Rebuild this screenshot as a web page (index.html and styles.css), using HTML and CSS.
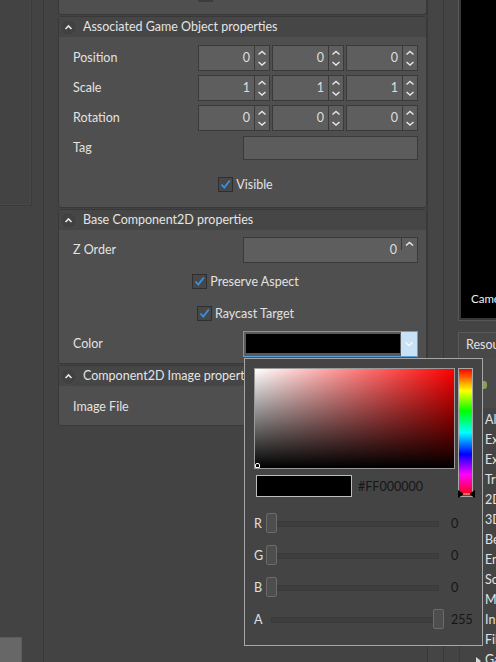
FILE: index.html
```html
<!DOCTYPE html>
<html lang="en">
<head>
    <meta charset="UTF-8">
    <title>Inspector</title>
    <link rel="stylesheet" href="styles.css">
</head>
<body>
    <div class="app">
        <div class="left-dock">
            <div class="left-panel"></div>
            <div class="left-foot"></div>
        </div>

        <div class="inspector">
            <div class="section section-top"><div class="top-stub"></div></div>

            <!-- Associated Game Object -->
            <div class="section">
                <div class="section-head">
                    <span class="toggle"><svg width="17" height="17" viewBox="0 0 17 17"><path d="M5.5 10 L8.5 7 L11.5 10" fill="none" stroke="#e6e6e6" stroke-width="1.6"/></svg></span>
                    <span class="title">Associated Game Object properties</span>
                </div>
                <div class="section-body body-go">
                    <div class="row">
                        <span class="label">Position</span>
                        <div class="vec">
                            <div class="spin"><span class="val">0</span><span class="spin-btns"><svg width="14" height="24" viewBox="0 0 14 24"><path d="M3.5 8.5 L7 5.5 L10.5 8.5 M3.5 16 L7 19 L10.5 16" fill="none" stroke="#e8e8e8" stroke-width="1.4"/></svg></span></div>
                            <div class="spin"><span class="val">0</span><span class="spin-btns"><svg width="14" height="24" viewBox="0 0 14 24"><path d="M3.5 8.5 L7 5.5 L10.5 8.5 M3.5 16 L7 19 L10.5 16" fill="none" stroke="#e8e8e8" stroke-width="1.4"/></svg></span></div>
                            <div class="spin"><span class="val">0</span><span class="spin-btns"><svg width="14" height="24" viewBox="0 0 14 24"><path d="M3.5 8.5 L7 5.5 L10.5 8.5 M3.5 16 L7 19 L10.5 16" fill="none" stroke="#e8e8e8" stroke-width="1.4"/></svg></span></div>
                        </div>
                    </div>
                    <div class="row">
                        <span class="label">Scale</span>
                        <div class="vec">
                            <div class="spin"><span class="val">1</span><span class="spin-btns"><svg width="14" height="24" viewBox="0 0 14 24"><path d="M3.5 8.5 L7 5.5 L10.5 8.5 M3.5 16 L7 19 L10.5 16" fill="none" stroke="#e8e8e8" stroke-width="1.4"/></svg></span></div>
                            <div class="spin"><span class="val">1</span><span class="spin-btns"><svg width="14" height="24" viewBox="0 0 14 24"><path d="M3.5 8.5 L7 5.5 L10.5 8.5 M3.5 16 L7 19 L10.5 16" fill="none" stroke="#e8e8e8" stroke-width="1.4"/></svg></span></div>
                            <div class="spin"><span class="val">1</span><span class="spin-btns"><svg width="14" height="24" viewBox="0 0 14 24"><path d="M3.5 8.5 L7 5.5 L10.5 8.5 M3.5 16 L7 19 L10.5 16" fill="none" stroke="#e8e8e8" stroke-width="1.4"/></svg></span></div>
                        </div>
                    </div>
                    <div class="row">
                        <span class="label">Rotation</span>
                        <div class="vec">
                            <div class="spin"><span class="val">0</span><span class="spin-btns"><svg width="14" height="24" viewBox="0 0 14 24"><path d="M3.5 8.5 L7 5.5 L10.5 8.5 M3.5 16 L7 19 L10.5 16" fill="none" stroke="#e8e8e8" stroke-width="1.4"/></svg></span></div>
                            <div class="spin"><span class="val">0</span><span class="spin-btns"><svg width="14" height="24" viewBox="0 0 14 24"><path d="M3.5 8.5 L7 5.5 L10.5 8.5 M3.5 16 L7 19 L10.5 16" fill="none" stroke="#e8e8e8" stroke-width="1.4"/></svg></span></div>
                            <div class="spin"><span class="val">0</span><span class="spin-btns"><svg width="14" height="24" viewBox="0 0 14 24"><path d="M3.5 8.5 L7 5.5 L10.5 8.5 M3.5 16 L7 19 L10.5 16" fill="none" stroke="#e8e8e8" stroke-width="1.4"/></svg></span></div>
                        </div>
                    </div>
                    <div class="row">
                        <span class="label">Tag</span>
                        <div class="text-field"></div>
                    </div>
                    <div class="check-row check-first">
                        <span class="checkbox"><svg width="13" height="13" viewBox="0 0 13 13"><path d="M2.5 6.5 L5.3 9.5 L10.8 2.5" fill="none" stroke="#3592e8" stroke-width="1.8"/></svg></span>
                        <span>Visible</span>
                    </div>
                </div>
            </div>

            <!-- Base Component2D -->
            <div class="section">
                <div class="section-head">
                    <span class="toggle"><svg width="17" height="17" viewBox="0 0 17 17"><path d="M5.5 10 L8.5 7 L11.5 10" fill="none" stroke="#e6e6e6" stroke-width="1.6"/></svg></span>
                    <span class="title">Base Component2D properties</span>
                </div>
                <div class="section-body body-base">
                    <div class="row">
                        <span class="label">Z Order</span>
                        <div class="z-field">
                            <span class="val">0</span>
                            <span class="z-btn"><svg width="15" height="12" viewBox="0 0 15 12"><path d="M4 7.5 L7.5 4.5 L11 7.5" fill="none" stroke="#e8e8e8" stroke-width="1.6"/></svg></span>
                        </div>
                    </div>
                    <div class="check-row">
                        <span class="checkbox"><svg width="13" height="13" viewBox="0 0 13 13"><path d="M2.5 6.5 L5.3 9.5 L10.8 2.5" fill="none" stroke="#3592e8" stroke-width="1.8"/></svg></span>
                        <span>Preserve Aspect</span>
                    </div>
                    <div class="check-row">
                        <span class="checkbox"><svg width="13" height="13" viewBox="0 0 13 13"><path d="M2.5 6.5 L5.3 9.5 L10.8 2.5" fill="none" stroke="#3592e8" stroke-width="1.8"/></svg></span>
                        <span>Raycast Target</span>
                    </div>
                    <div class="row">
                        <span class="label">Color</span>
                        <div class="color-field">
                            <span class="swatch"></span>
                            <span class="drop-btn"><svg width="16" height="24" viewBox="0 0 16 24"><path d="M4.5 10.5 L8 13.5 L11.5 10.5" fill="none" stroke="#f4f9fd" stroke-width="1.6"/></svg></span>
                        </div>
                    </div>
                </div>
            </div>

            <!-- Component2D Image -->
            <div class="section">
                <div class="section-head">
                    <span class="toggle"><svg width="17" height="17" viewBox="0 0 17 17"><path d="M5.5 10 L8.5 7 L11.5 10" fill="none" stroke="#e6e6e6" stroke-width="1.6"/></svg></span>
                    <span class="title">Component2D Image properties</span>
                </div>
                <div class="section-body body-image">
                    <div class="row">
                        <span class="label">Image File</span>
                    </div>
                </div>
            </div>
        </div>

        <div class="right-dock">
            <div class="dock-strip"></div>
            <div class="dock-main">
                <div class="scene-frame">
                    <div class="scene"><span class="scene-label">Camera</span></div>
                </div>
                <div class="res-tab">Resources</div>
                <div class="res-toolbar"><span class="add-icon"></span></div>
                <ul class="res-list">
                    <li>All Resources</li>
                    <li>Examples</li>
                    <li>Exported</li>
                    <li>Triggers</li>
                    <li>2D Sprites</li>
                    <li>3D Models</li>
                    <li>Behaviours</li>
                    <li>Environment</li>
                    <li>Sounds</li>
                    <li>Materials</li>
                    <li>Instances</li>
                    <li>Files</li>
                    <li class="folded">Game Objects</li>
                </ul>
            </div>
        </div>
    </div>

    <!-- color picker popup over the inspector -->
    <div class="color-popup">
        <div class="picker-top">
            <div class="picker-left">
                <div class="sv-box"><span class="sv-marker"></span></div>
                <div class="preview-row">
                    <span class="preview"></span>
                    <span class="hex">#FF000000</span>
                </div>
            </div>
            <div class="hue-bar">
                <svg class="hue-marker" width="17" height="8" viewBox="0 0 17 8"><path d="M0 0 L6 4 L0 8 Z M17 0 L11 4 L17 8 Z" fill="#000"/><path d="M5 4 H12" stroke="#d0d0d0" stroke-width="1"/></svg>
            </div>
        </div>
        <div class="sliders">
            <div class="slider-row">
                <span class="ch">R</span>
                <div class="track"><span class="handle"></span></div>
                <span class="num">0</span>
            </div>
            <div class="slider-row">
                <span class="ch">G</span>
                <div class="track"><span class="handle"></span></div>
                <span class="num">0</span>
            </div>
            <div class="slider-row">
                <span class="ch">B</span>
                <div class="track"><span class="handle"></span></div>
                <span class="num">0</span>
            </div>
            <div class="slider-row">
                <span class="ch">A</span>
                <div class="track track-full"><span class="handle"></span></div>
                <span class="num">255</span>
            </div>
        </div>
    </div>
</body>
</html>
```

FILE: styles.css
```css
* {
    box-sizing: border-box;
}
body {
    margin: 0;
    width: 496px;
    height: 662px;
    overflow: hidden;
    position: relative;
    background-color: #434343;
    font-family: Lato, "Noto Sans", sans-serif;
    font-size: 12.5px;
    color: #e2e2e2;
}
.app {
    display: flex;
    height: 662px;
}

/* left dock */
.left-dock {
    width: 44px;
    flex-shrink: 0;
    border-right: 1px solid #393939;
    display: flex;
    flex-direction: column;
    justify-content: space-between;
}
.left-panel {
    width: 32px;
    height: 206px;
    border-right: 1px solid #3b3b3b;
    border-bottom: 1px solid #3b3b3b;
    box-shadow: inset -1px -1px 0 #484848;
}
.left-foot {
    width: 22px;
    height: 25px;
    background-color: #676767;
    border-top: 1px solid #5c5c5c;
    border-right: 1px solid #5c5c5c;
}

/* inspector */
.inspector {
    width: 384px;
    flex-shrink: 0;
    padding-left: 14px;
    border-right: 1px solid #383838;
}
.section {
    background-color: #4f4f4f;
    border: 1px solid #393939;
    border-radius: 3px;
    margin-bottom: 1px;
}
.section + .section + .section {
    margin-top: 1px;
}
.section-top {
    height: 15px;
    border-top: none;
    border-radius: 0 0 3px 3px;
}
.top-stub {
    width: 15px;
    height: 2px;
    margin-left: 139px;
    background-color: #3c3c3c;
}
.section-head {
    height: 20px;
    background-color: #464646;
    display: flex;
    align-items: center;
    padding-left: 1px;
}
.toggle {
    width: 17px;
    height: 17px;
    border-radius: 50%;
    background-color: #414141;
    border: 1px solid #4b4b4b;
    display: flex;
    align-items: center;
    justify-content: center;
}
.toggle svg {
    flex-shrink: 0;
}
.title {
    margin-left: 6px;
    margin-top: -1px;
    color: #e4e4e4;
}
.section-body {
    padding: 0 8px 0 14px;
}
.body-go {
    padding-top: 6px;
    padding-bottom: 8px;
}
.body-base {
    padding-top: 5px;
    padding-bottom: 4px;
}
.body-image {
    padding-top: 6px;
    padding-bottom: 3px;
}
.row {
    height: 30px;
    display: flex;
    align-items: center;
    justify-content: space-between;
}
.label {
    color: #e2e2e2;
    margin-top: -1px;
}

/* spin boxes */
.vec {
    display: flex;
    gap: 2px;
}
.spin {
    width: 72px;
    height: 26px;
    display: flex;
    background-color: #5e5e5e;
    border: 1px solid #3a3a3a;
}
.val {
    flex: 1;
    text-align: right;
    padding-right: 4px;
    line-height: 24px;
    color: #dedede;
}
.spin-btns {
    width: 15px;
    border-left: 1px solid #3a3a3a;
    display: flex;
}
.text-field {
    width: 175px;
    height: 24px;
    background-color: #5c5c5c;
    border: 1px solid #3a3a3a;
}
.z-field {
    width: 175px;
    height: 26px;
    display: flex;
    background-color: #5e5e5e;
    border: 1px solid #3a3a3a;
}
.z-btn {
    width: 16px;
    height: 12px;
    border-left: 1px solid #3a3a3a;
    display: flex;
}

/* color field */
.color-field {
    width: 175px;
    height: 26px;
    display: flex;
    border: 1px solid #5d9fd8;
    background-color: #5a5a5a;
}
.swatch {
    flex: 1;
    margin: 2px 1px 3px 2px;
    background-color: #000;
}
.drop-btn {
    width: 16px;
    background-color: #c7e2f6;
    display: flex;
}

/* checkboxes */
.check-row {
    height: 32px;
    display: flex;
    align-items: center;
    justify-content: center;
    gap: 3px;
}
.check-first {
    height: 30px;
    margin-top: 6px;
}
.checkbox {
    width: 15px;
    height: 15px;
    background-color: #474747;
    border: 1px solid #2f2f2f;
    display: flex;
    align-items: center;
    justify-content: center;
}

/* right dock */
.right-dock {
    flex: 1;
    display: flex;
    overflow: hidden;
}
.dock-strip {
    width: 16px;
    flex-shrink: 0;
    background-color: #454545;
    border-right: 1px solid #393939;
}
.dock-main {
    flex: 1;
    padding-left: 14px;
    background-color: #444444;
    min-width: 0;
}
.scene-frame {
    height: 321px;
    border-left: 1px solid #575757;
    border-bottom: 1px solid #575757;
    padding: 0 0 2px 2px;
    background-color: #383838;
    display: flex;
}
.scene {
    flex: 1;
    background-color: #000;
    display: flex;
    align-items: flex-end;
    padding: 0 0 13px 10px;
    white-space: nowrap;
    overflow: hidden;
}
.scene-label {
    font-size: 11.5px;
    color: #f0f0f0;
}
.res-tab {
    margin-top: 11px;
    height: 26px;
    border-top: 1px solid #595959;
    border-left: 1px solid #595959;
    background-color: #484848;
    padding-left: 7px;
    line-height: 24px;
    white-space: nowrap;
    overflow: hidden;
    color: #e2e2e2;
}
.res-toolbar {
    height: 50px;
    background-color: #4a4a4a;
    display: flex;
    align-items: center;
    padding: 3px 0 0 20px;
}
.add-icon {
    width: 9px;
    height: 8px;
    border-radius: 3px;
    background-color: #86a34f;
}
.res-list {
    list-style: none;
    margin: 2px 0 0 1px;
    padding: 0 0 0 25px;
    white-space: nowrap;
    overflow: hidden;
    border-left: 1px solid #3c3c3c;
}
.res-list li {
    height: 20px;
    line-height: 20px;
    color: #e2e2e2;
    position: relative;
}
.res-list li.folded::before {
    content: "";
    position: absolute;
    left: -9px;
    top: 7px;
    border-left: 5px solid #d8d8d8;
    border-top: 4px solid transparent;
    border-bottom: 4px solid transparent;
}

/* color picker popup */
.color-popup {
    position: absolute;
    left: 244px;
    top: 358px;
    width: 239px;
    height: 288px;
    background-color: #444444;
    border: 1px solid #a7a7a7;
    padding: 9px 9px 0 9px;
}
.picker-top {
    display: flex;
    align-items: flex-start;
}
.sv-box {
    width: 201px;
    height: 101px;
    border: 1px solid #9a9a9a;
    background: linear-gradient(to top, #000, rgba(0, 0, 0, 0)),
                linear-gradient(to right, #fff, #f00);
    position: relative;
}
.sv-marker {
    position: absolute;
    left: 0;
    bottom: 0;
    width: 5px;
    height: 5px;
    border: 1px solid #fff;
    border-radius: 2px 2px 0 0;
}
.preview-row {
    display: flex;
    align-items: center;
    margin-top: 6px;
}
.preview {
    width: 96px;
    height: 22px;
    margin-left: 2px;
    background-color: #000;
    border: 1px solid #bdbdbd;
}
.hex {
    margin-left: 6px;
    color: #161616;
}
.hue-bar {
    width: 17px;
    height: 129px;
    margin-left: 3px;
    border: 1px solid #a9a9a9;
    background: linear-gradient(to bottom, #f00, #ff0 17%, #0f0 33%, #0ff 50%, #00f 67%, #f0f 83%, #f00);
    position: relative;
}
.hue-marker {
    position: absolute;
    left: -1px;
    bottom: -2px;
}
.sliders {
    margin-top: 10px;
}
.slider-row {
    height: 32px;
    display: grid;
    grid-template-columns: 12px 178px auto;
    align-items: center;
}
.slider-row .ch {
    color: #e0e0e0;
}
.track {
    height: 20px;
    position: relative;
    display: flex;
}
.track::before {
    content: "";
    position: absolute;
    left: 5px;
    right: 5px;
    top: 8px;
    height: 4px;
    background-color: #3e3e3e;
    border: 1px solid #3a3a3a;
}
.handle {
    width: 11px;
    height: 20px;
    background-color: #4e4e4e;
    border: 1px solid #6b6b6b;
    border-radius: 2px;
    position: relative;
}
.track-full .handle {
    margin-left: auto;
}
.num {
    margin-left: 7px;
    color: #161616;
}
```
